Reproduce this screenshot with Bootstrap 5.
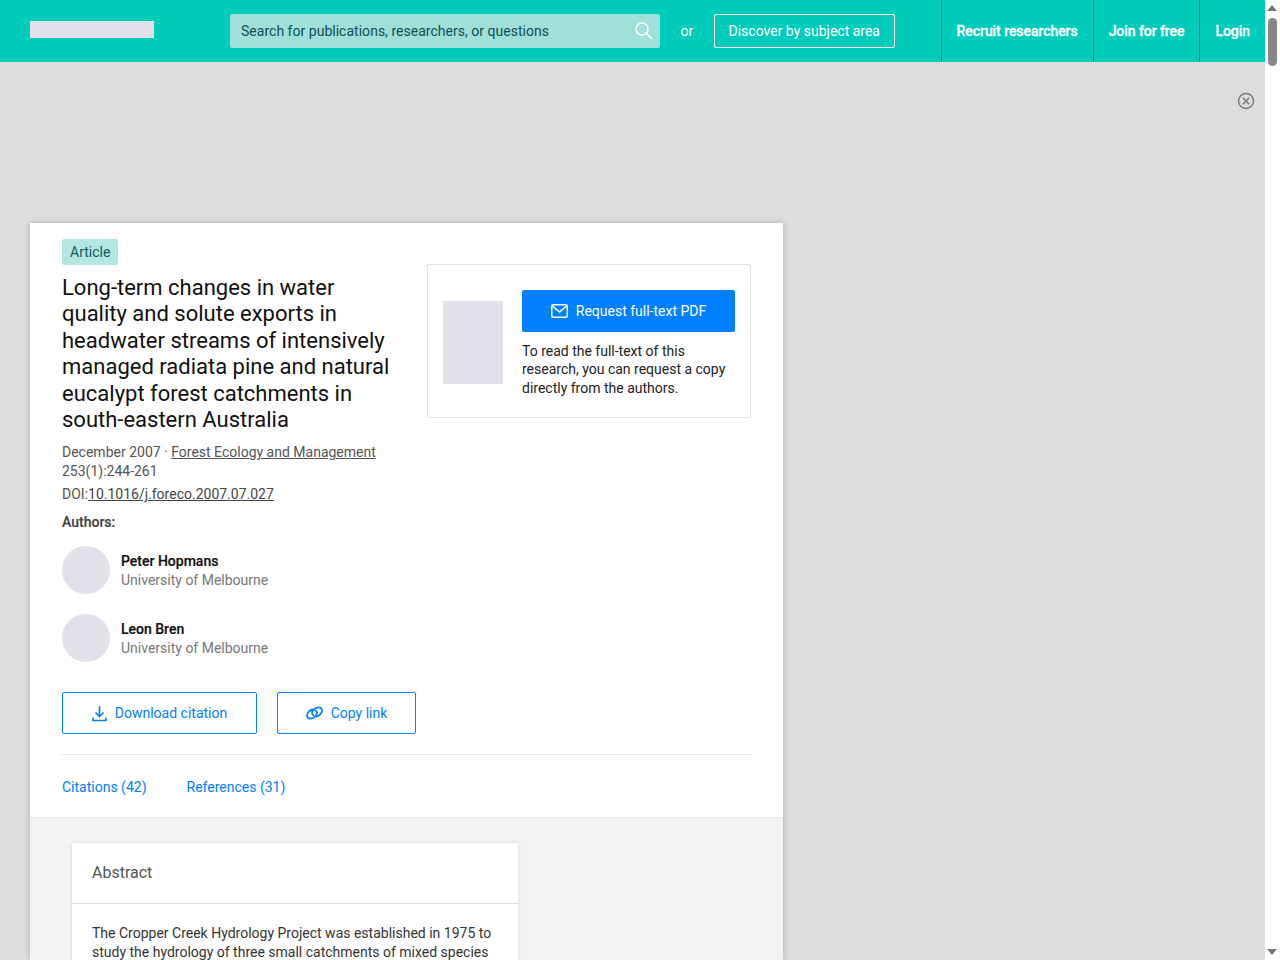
<!DOCTYPE html>
<html lang="en">
<head>
<meta charset="utf-8">
<title>Long-term changes in water quality</title>
<link href="https://cdn.jsdelivr.net/npm/bootstrap@5.3.0/dist/css/bootstrap.min.css" rel="stylesheet">
<style>
html,body{height:960px;overflow:hidden}
body{background:#ddd;font-family:Roboto,"Liberation Sans",sans-serif;font-size:14px;line-height:19px;color:#111;width:1265px}
.rg-top{height:62px;background:#00ccbb;padding-left:30px}
.rg-logo{width:124px;height:17px;background:#e1e1ea;margin:0 76px 3px 0}
.rg-search{width:430px;height:34px;background:#9fe0d9;border-radius:2px;padding:0 6px 0 11px;color:#0c4f55;letter-spacing:.02px}
.rg-or{color:#fff;margin:0 20.5px}
.rg-disc{height:34px;width:181px;border:1px solid #fff;border-radius:2px;color:#fff;font-size:14px;padding:0}
.rg-gap{flex:1}
.rg-nav{height:62px;border-left:1px solid #0b7d74;color:#fff;font-weight:500;-webkit-text-stroke:.3px #fff;padding:0 15px;letter-spacing:-.06px}
.rg-nav-end{padding-left:15px}
.rg-adband{height:161px;padding:30px 10px 0 0}
.rg-sheet{width:753px;height:737px;margin-left:30px;background:#f3f3f3;box-shadow:0 0 6px rgba(0,0,0,.22);overflow:hidden}
.rg-head{height:595px;background:#fff;padding:16px 32px 0;border-bottom:1px solid #e8e8e8}
.rg-tag{background:#b5e6e1;color:#0c5a5c;border-radius:2px;padding:0 8px;height:26px;line-height:26px;display:inline-block;font-size:14px}
.rg-title{font-size:22px;line-height:26.4px;font-weight:400;color:#111;margin:10px 0 0;width:332px}
.rg-meta{color:#555;margin-top:10px}
.rg-meta a{color:#555}
.rg-doi{margin-top:4px;color:#555}
.rg-doi a{color:#444}
.rg-auth-l{font-weight:500;color:#444;margin-top:9px;-webkit-text-stroke:.2px #444}
.rg-person{margin-top:20px}
.rg-first{margin-top:14px}
.rg-av{width:48px;height:48px;border-radius:50%;background:#e1e1ea;margin-right:11px;flex:none}
.rg-who{padding-top:2px}
.rg-name{font-weight:500;color:#111;-webkit-text-stroke:.2px #111}
.rg-inst{color:#777}
.rg-pdf{width:324px;height:154px;border:1px solid #e2e2e2;border-radius:2px;margin-top:25px;padding:25px 15px 0;flex:none}
.rg-thumb{width:60px;height:83px;background:#e1e1ea;margin:11px 19px 0 0;flex:none}
.rg-req{width:213px;height:42px;background:#0080ff;color:#fff;border:0;border-radius:2px;padding:0;font-size:14px}
.rg-note{margin:9.5px 0 0;color:#222;line-height:18.5px}
.rg-actions{gap:20px;margin-top:30px}
.rg-line{height:42px;border:1px solid #0080ff;border-radius:2px;color:#0080ff;background:#fff;font-size:14px;padding:0}
.rg-w1{width:195px}
.rg-w2{width:139px}
.rg-tabs{border-top:1px solid #e6e6e6;margin-top:20px;padding-top:23px;color:#0080ff;gap:40px;width:689px}
.rg-abs{width:446px;margin:25px 0 0 42px;background:#fff;box-shadow:0 0 3px rgba(0,0,0,.15)}
.rg-abs-h{height:61px;line-height:60px;padding-left:20px;font-size:16px;color:#555;border-bottom:1px solid #ddd}
.rg-abs-b{padding:20px 20px 0;color:#333;line-height:19px}
.rg-scroll{position:fixed;top:0;right:0;width:15px;height:960px;background:#fff}
.rg-thumbbar{position:absolute;left:3px;top:18px;width:9px;height:48px;background:#888;border-radius:5px}
.rg-arrow{position:absolute;left:2px;width:0;height:0;border-left:5px solid transparent;border-right:5px solid transparent}
.rg-up{top:5px;border-bottom:6px solid #777}
.rg-down{bottom:5px;border-top:6px solid #777}
</style>
</head>
<body>
<header class="rg-top d-flex align-items-center">
  <div class="rg-logo"></div>
  <div class="rg-search d-flex align-items-center justify-content-between">
    <span>Search for publications, researchers, or questions</span>
    <svg width="20" height="20" viewBox="0 0 20 20" fill="none" stroke="#fff" stroke-width="1.5"><circle cx="8" cy="8" r="6"/><path d="M12.5 12.5 18 18"/></svg>
  </div>
  <span class="rg-or">or</span>
  <button class="btn rg-disc">Discover by subject area</button>
  <div class="rg-gap"></div>
  <div class="rg-nav d-flex align-items-center">Recruit researchers</div>
  <div class="rg-nav d-flex align-items-center">Join for free</div>
  <div class="rg-nav rg-nav-end d-flex align-items-center">Login</div>
</header>
<div class="rg-adband d-flex justify-content-end align-items-start">
  <svg width="18" height="18" viewBox="0 0 18 18" fill="none" stroke="#777" stroke-width="1.4"><circle cx="9" cy="9" r="7.5"/><path d="M5.8 5.8l6.4 6.4M12.2 5.8l-6.4 6.4"/></svg>
</div>
<main class="rg-sheet">
  <section class="rg-head">
    <div class="d-flex justify-content-between">
      <div>
        <span class="rg-tag">Article</span>
        <h1 class="rg-title">Long-term changes in water quality and solute exports in headwater streams of intensively managed radiata pine and natural eucalypt forest catchments in south-eastern Australia</h1>
        <div class="rg-meta">December 2007 · <a href="#">Forest Ecology and Management</a><br>253(1):244-261</div>
        <div class="rg-doi">DOI:<a href="#">10.1016/j.foreco.2007.07.027</a></div>
        <div class="rg-auth-l">Authors:</div>
        <div class="d-flex align-items-center rg-first">
          <div class="rg-av"></div>
          <div class="rg-who"><div class="rg-name">Peter Hopmans</div><div class="rg-inst">University of Melbourne</div></div>
        </div>
        <div class="d-flex align-items-center rg-person">
          <div class="rg-av"></div>
          <div class="rg-who"><div class="rg-name">Leon Bren</div><div class="rg-inst">University of Melbourne</div></div>
        </div>
      </div>
      <aside class="rg-pdf d-flex">
        <div class="rg-thumb"></div>
        <div>
          <button class="btn rg-req d-flex align-items-center justify-content-center gap-2">
            <svg width="17" height="14" viewBox="0 0 17 14" fill="none" stroke="#fff" stroke-width="1.5"><rect x=".8" y=".8" width="15.4" height="12.4" rx="1.5"/><path d="M1.5 2l7 6 7-6"/></svg>
            Request full-text PDF
          </button>
          <p class="rg-note">To read the full-text of this research, you can request a copy directly from the authors.</p>
        </div>
      </aside>
    </div>
    <div class="d-flex rg-actions">
      <button class="btn rg-line rg-w1 d-flex align-items-center justify-content-center gap-2">
        <svg width="15" height="17" viewBox="0 0 15 17" fill="none" stroke="#0080ff" stroke-width="1.6"><path d="M7.500 1v10M3.500 7.500l4 4 4-4M1 12.500v3h13v-3"/></svg>
        Download citation
      </button>
      <button class="btn rg-line rg-w2 d-flex align-items-center justify-content-center gap-2">
        <svg width="17" height="14" viewBox="0 0 17 14" fill="none" stroke="#0080ff" stroke-width="1.8" stroke-linecap="round"><path d="M6.500 3.500C4 4 1 6.500 1 9.500c0 2.500 2.500 3.500 4.500 3 2.500-.6 5.500-3 5.500-5.500 0-1.200-.6-1.800-1.500-2.200"/><path d="M10.500 10.500c2.500-.5 5.500-3 5.500-6 0-2.500-2.500-3.500-4.500-3C9 2.100 6 4.500 6 7c0 1.200.6 1.800 1.500 2.200"/></svg>
        Copy link
      </button>
    </div>
    <div class="rg-tabs d-flex"><span>Citations (42)</span><span>References (31)</span></div>
  </section>
  <section class="rg-abs">
    <div class="rg-abs-h">Abstract</div>
    <div class="rg-abs-b">The Cropper Creek Hydrology Project was established in 1975 to study the hydrology of three small catchments of mixed species</div>
  </section>
</main>
<div class="rg-scroll"><div class="rg-arrow rg-up"></div><div class="rg-thumbbar"></div><div class="rg-arrow rg-down"></div></div>
<script src="https://cdn.jsdelivr.net/npm/bootstrap@5.3.0/dist/js/bootstrap.bundle.min.js"></script>
</body>
</html>
